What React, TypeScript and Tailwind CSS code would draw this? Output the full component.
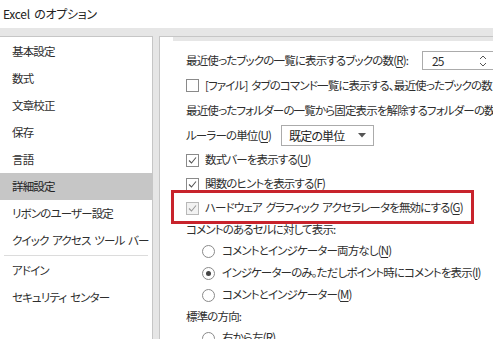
import React from 'react'

const font = { fontFamily: '"Noto Sans CJK JP", "Noto Sans", sans-serif' }

function U({ children }: { children: React.ReactNode }) {
  return <span className="underline underline-offset-2">{children}</span>
}

function Check({ checked, disabled }: { checked?: boolean; disabled?: boolean }) {
  return (
    <span
      className={`flex h-[13px] w-[13px] shrink-0 items-center justify-center border ${
        disabled ? 'border-[#b8b8b8] bg-[#f2f2f2]' : 'border-[#8a8a8a] bg-white'
      }`}
    >
      {checked && (
        <svg width="11" height="11" viewBox="0 0 11 11">
          <path d="M2 5.5 L4.5 8 L9 2.5" fill="none" stroke={disabled ? '#9a9a9a' : '#555'} strokeWidth="1.1" />
        </svg>
      )}
    </span>
  )
}

function Radio({ on }: { on?: boolean }) {
  return (
    <span className="flex h-[13px] w-[13px] shrink-0 items-center justify-center rounded-full border border-[#8a8a8a] bg-white">
      {on && <span className="h-[5px] w-[5px] rounded-full bg-[#444]" />}
    </span>
  )
}

const menu = [
  '基本設定',
  '数式',
  '文章校正',
  '保存',
  '言語',
  '詳細設定',
  'リボンのユーザー設定',
  'クイック アクセス ツール バー',
]

export default function App() {
  return (
    <div
      className="flex h-[339px] w-[493px] flex-col overflow-hidden whitespace-nowrap bg-white text-[11.5px] tracking-[-0.85px] text-[#2e2e2e] [font-feature-settings:'palt'] [word-spacing:2px]"
      style={font}
    >
      <div className="flex h-[28px] shrink-0 items-center px-[3px] text-[12px] tracking-[-0.3px] text-[#222]">
        Excel のオプション
      </div>
      <div className="flex flex-1 gap-[6px] bg-[#e6e6e6] pt-[8px]">
        {/* left menu */}
        <div className="w-[153px] shrink-0 border-r border-t border-[#c6c6c6] bg-white pt-[1px]">
          {menu.map((m) => (
            <div
              key={m}
              className={`flex h-[27px] items-center pl-[12px] ${m === '詳細設定' ? 'bg-[#c6c6c6] text-[#222]' : ''}`}
            >
              {m}
            </div>
          ))}
          <div className="mx-[4px] my-[1px] h-px bg-[#dcdcdc]" />
          <div className="flex h-[27px] items-center pl-[12px]">アドイン</div>
          <div className="flex h-[27px] items-center pl-[12px]">セキュリティ センター</div>
        </div>

        {/* right content */}
        <div className="relative min-w-0 flex-1 overflow-hidden border-l border-t border-[#c6c6c6] bg-white">
          <div className="ml-[13px] h-[4px] bg-[#e6e6e6]" />
          <div className="pl-[26px] pt-[7px]">
            <div className="flex h-[25px] items-center">
              最近使ったブックの一覧に表示するブックの数(<U>R</U>):
              <div className="relative ml-[14px] flex h-[19px] w-[80px] shrink-0 items-center border border-[#ababab] pl-[9px] text-[12px]">
                25
                <svg className="absolute left-[56px] top-[2px]" width="8" height="14" viewBox="0 0 8 14">
                  <path d="M1 5 L4 2 L7 5" fill="none" stroke="#555" strokeWidth="1" />
                  <path d="M1 9 L4 12 L7 9" fill="none" stroke="#555" strokeWidth="1" />
                </svg>
              </div>
            </div>
            <div className="flex h-[25px] items-center gap-[6px]">
              <Check />
              <span>[ファイル] タブのコマンド一覧に表示する、最近使ったブックの数</span>
            </div>
            <div className="flex h-[25px] items-center">最近使ったフォルダーの一覧から固定表示を解除するフォルダーの数</div>
            <div className="flex h-[25px] items-center">
              ルーラーの単位(<U>U</U>)
              <div className="ml-[10px] flex h-[21px] w-[93px] shrink-0 items-center justify-between border border-[#ababab] pl-[7px] pr-[7px] text-[12px] text-[#222]">
                既定の単位
                <svg width="8" height="5" viewBox="0 0 8 5">
                  <path d="M0 0 L8 0 L4 4.5 Z" fill="#555" />
                </svg>
              </div>
            </div>
            <div className="flex h-[24px] items-center gap-[6px]">
              <Check checked />
              <span>
                数式バーを表示する(<U>U</U>)
              </span>
            </div>
            <div className="flex h-[24px] items-center gap-[6px]">
              <Check checked />
              <span>
                関数のヒントを表示する(<U>F</U>)
              </span>
            </div>
            <div className="flex h-[24px] items-center gap-[6px]">
              <Check checked disabled />
              <span>
                ハードウェア グラフィック アクセラレータを無効にする(<U>G</U>)
              </span>
            </div>
            <div className="flex h-[20px] items-center">コメントのあるセルに対して表示:</div>
            <div className="flex h-[22px] items-center gap-[7px] pl-[16px]">
              <Radio />
              <span>
                コメントとインジケーター両方なし(<U>N</U>)
              </span>
            </div>
            <div className="flex h-[22px] items-center gap-[7px] pl-[16px]">
              <Radio on />
              <span>
                インジケーターのみ。ただしポイント時にコメントを表示(<U>I</U>)
              </span>
            </div>
            <div className="flex h-[22px] items-center gap-[7px] pl-[16px]">
              <Radio />
              <span>
                コメントとインジケーター(<U>M</U>)
              </span>
            </div>
            <div className="flex h-[21px] items-center">標準の方向:</div>
            <div className="flex h-[22px] items-center gap-[7px] pl-[16px]">
              <Radio />
              <span>
                右から左(<U>R</U>)
              </span>
            </div>
          </div>
          {/* red annotation box */}
          <div className="pointer-events-none absolute left-[11px] top-[153px] h-[34px] w-[303px] border-[3px] border-[#c8232c]" />
        </div>
      </div>
    </div>
  )
}
